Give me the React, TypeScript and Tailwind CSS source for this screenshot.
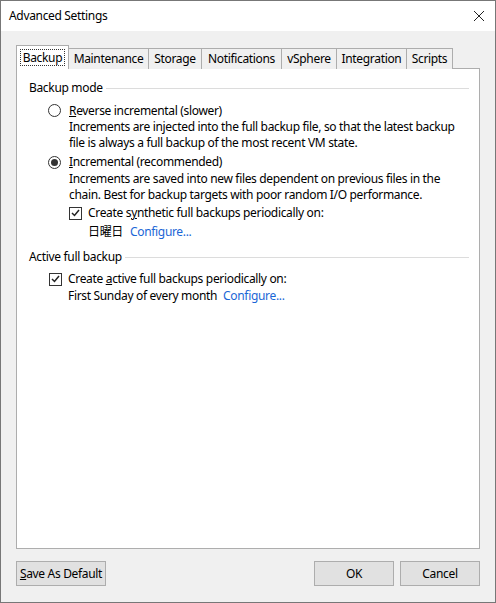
import React from "react";

const tabs = ["Backup", "Maintenance", "Storage", "Notifications", "vSphere", "Integration", "Scripts"];
const tabWidths = ["w-[53px]", "w-[80px]", "w-[53px]", "w-[80px]", "w-[55px]", "w-[70px]", "w-[46px]"];

function Radio({ checked }: { checked?: boolean }) {
  return (
    <span className="w-[13px] h-[13px] rounded-full border border-[#333] bg-white flex items-center justify-center shrink-0">
      {checked && <span className="w-[7px] h-[7px] rounded-full bg-[#333]" />}
    </span>
  );
}

function Checkbox() {
  return (
    <span className="w-[13px] h-[13px] border border-[#333] bg-white flex items-center justify-center shrink-0">
      <svg width="9" height="8" viewBox="0 0 9 8">
        <path d="M1 4 L3.5 6.5 L8 1" fill="none" stroke="#222" strokeWidth="1.5" />
      </svg>
    </span>
  );
}

function GroupTitle({ title }: { title: string }) {
  return (
    <div className="flex items-center h-[16px] pr-[10px]">
      <span>{title}</span>
      <div className="flex-1 h-px bg-[#dcdcdc] ml-[3px]" />
    </div>
  );
}

export default function App() {
  return (
    <div
      className="w-[496px] h-[603px] border border-[#777] bg-[#f0f0f0] flex flex-col text-[12px] leading-[16px] tracking-[-0.33px] text-black whitespace-nowrap"
      style={{ fontFamily: '"Segoe UI", "Noto Sans", "Noto Sans CJK JP", sans-serif' }}
    >
      {/* Title bar */}
      <div className="h-[30px] bg-white flex items-center justify-between pl-[8px] pr-[10px] shrink-0">
        <span className="text-[12px]">Advanced Settings</span>
        <svg width="12" height="12" viewBox="0 0 12 12">
          <path d="M1 1 L11 11 M11 1 L1 11" stroke="#222" strokeWidth="1" />
        </svg>
      </div>

      <div className="flex-1 flex flex-col px-[15px] pt-[15px]">
        {/* Tabs */}
        <div className="flex items-end h-[23px] -mb-px relative z-10">
          {tabs.map((t, i) =>
            i === 0 ? (
              <div
                key={t}
                className={`${tabWidths[i]} h-[24px] bg-white border border-b-0 border-[#adadad] flex items-center justify-center`}
              >
                <span className="border border-dotted border-[#333] px-[2px] leading-[15px]">{t}</span>
              </div>
            ) : (
              <div
                key={t}
                className={`${tabWidths[i]} h-[21px] bg-[#f0f0f0] border border-l-0 border-b-0 border-[#adadad] flex items-center justify-center`}
              >
                {t}
              </div>
            )
          )}
        </div>

        {/* Panel */}
        <div className="w-[464px] h-[481px] bg-white border border-[#adadad] pl-[12px] pt-[11px]">
          <GroupTitle title="Backup mode" />

          <div className="pl-[19px] mt-[6px]">
            <div className="flex items-center gap-[8px] h-[17px]">
              <Radio />
              <span>
                <span className="underline">R</span>everse incremental (slower)
              </span>
            </div>
            <div className="pl-[21px]">
              <div>Increments are injected into the full backup file, so that the latest backup</div>
              <div>file is always a full backup of the most recent VM state.</div>
            </div>

            <div className="flex items-center gap-[8px] h-[18px] mt-[2px]">
              <Radio checked />
              <span>
                <span className="underline">I</span>ncremental (recommended)
              </span>
            </div>
            <div className="pl-[21px]">
              <div>Increments are saved into new files dependent on previous files in the</div>
              <div>chain. Best for backup targets with poor random I/O performance.</div>
              <div className="flex items-center gap-[6px] h-[16px] mt-[2px]">
                <Checkbox />
                <span>
                  Create s<span className="underline">y</span>nthetic full backups periodically on:
                </span>
              </div>
              <div className="flex gap-[7px] mt-[3px] pl-[19px]">
                <span>日曜日</span>
                <span className="text-[#1a66d6]">Configure...</span>
              </div>
            </div>
          </div>

          <div className="mt-[9px]">
            <GroupTitle title="Active full backup" />
          </div>

          <div className="pl-[20px] mt-[6px]">
            <div className="flex items-center gap-[6px] h-[16px]">
              <Checkbox />
              <span>
                Create <span className="underline">a</span>ctive full backups periodically on:
              </span>
            </div>
            <div className="flex gap-[6px] mt-px pl-[19px]">
              <span>First Sunday of every month</span>
              <span className="text-[#1a66d6]">Configure...</span>
            </div>
          </div>
        </div>

        {/* Buttons */}
        <div className="flex items-center mt-[12px]">
          <button className="w-[90px] h-[25px] bg-[#e1e1e1] border border-[#adadad] text-[12px]">
            <span className="underline">S</span>ave As Default
          </button>
          <div className="flex-1" />
          <button className="w-[80px] h-[25px] bg-[#e1e1e1] border border-[#adadad] text-[12px]">OK</button>
          <button className="w-[80px] h-[25px] bg-[#e1e1e1] border border-[#adadad] text-[12px] ml-[6px]">
            Cancel
          </button>
        </div>
      </div>
    </div>
  );
}
